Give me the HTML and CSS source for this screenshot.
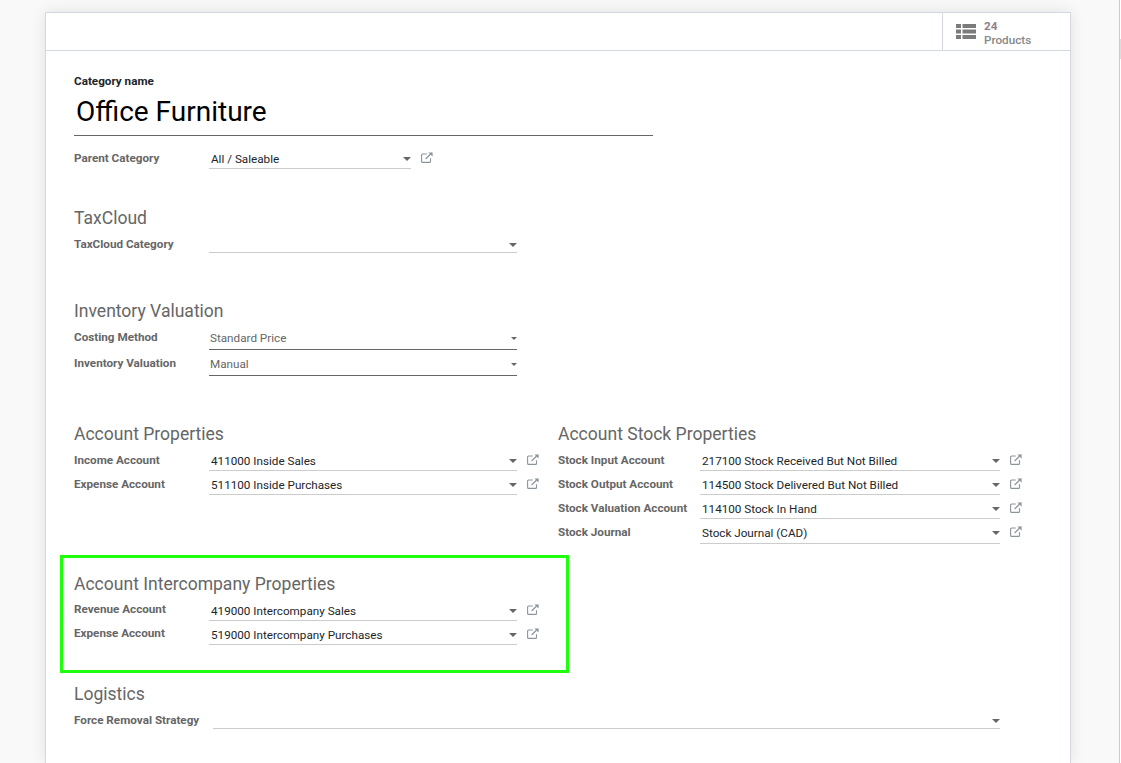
FILE: index.html
```html
<!DOCTYPE html>
<html lang="en">
<head>
  <meta charset="UTF-8" />
  <title>Office Furniture</title>
  <link rel="stylesheet" href="styles.css">
</head>
<body>
  <svg class="defs" width="0" height="0">
    <symbol id="ext" viewBox="0 0 12 11">
      <path d="M9.5 6.2V9.4a1 1 0 0 1-1 1H1.600a1 1 0 0 1-1-1V3a1 1 0 0 1 1-1h4.200" fill="none" stroke="currentColor" stroke-width="1.1"/>
      <path d="M4.600 7 10.600 1" fill="none" stroke="currentColor" stroke-width="1.2"/>
      <path d="M7.400 .4h4.200v4.200z" fill="currentColor"/>
    </symbol>
  </svg>

  <div class="scroll-edge"><i class="scroll-thumb"></i></div>

  <div class="sheet">
    <div class="button-box">
      <button class="stat-button">
        <svg class="stat-icon" width="20" height="15" viewBox="0 0 20 15">
          <path d="M0 0h5v4H0zM6.500 0H20v4H6.500zM0 5.500h5v4H0zM6.500 5.500H20v4H6.500zM0 11h5v4H0zM6.500 11H20v4H6.500z" fill="#7c7b7b"/>
        </svg>
        <span class="stat-text"><b class="stat-value">24</b><span>Products</span></span>
      </button>
    </div>

    <div class="form">
      <label class="title-label">Category name</label>
      <div class="title-name">Office Furniture</div>

      <div class="row parent-row">
        <label>Parent Category</label>
        <div class="field parent-field"><span>All / Saleable</span><i class="caret"></i></div>
        <svg class="ext"><use href="#ext"/></svg>
      </div>

      <h3 class="taxcloud-head">TaxCloud</h3>
      <div class="row">
        <label>TaxCloud Category</label>
        <div class="field field-empty"><span></span><i class="caret"></i></div>
      </div>

      <h3 class="inventory-head">Inventory Valuation</h3>
      <div class="row row-tall">
        <label>Costing Method</label>
        <div class="field field-select"><span>Standard Price</span><i class="caret caret-small"></i></div>
      </div>
      <div class="row row-tall">
        <label>Inventory Valuation</label>
        <div class="field field-select"><span>Manual</span><i class="caret caret-small"></i></div>
      </div>

      <div class="columns">
        <div class="group">
          <h3>Account Properties</h3>
          <div class="row">
            <label>Income Account</label>
            <div class="field"><span>411000 Inside Sales</span><i class="caret"></i></div>
            <svg class="ext"><use href="#ext"/></svg>
          </div>
          <div class="row">
            <label>Expense Account</label>
            <div class="field"><span>511100 Inside Purchases</span><i class="caret"></i></div>
            <svg class="ext"><use href="#ext"/></svg>
          </div>
        </div>
        <div class="group group-right">
          <h3>Account Stock Properties</h3>
          <div class="row">
            <label>Stock Input Account</label>
            <div class="field"><span>217100 Stock Received But Not Billed</span><i class="caret"></i></div>
            <svg class="ext"><use href="#ext"/></svg>
          </div>
          <div class="row">
            <label>Stock Output Account</label>
            <div class="field"><span>114500 Stock Delivered But Not Billed</span><i class="caret"></i></div>
            <svg class="ext"><use href="#ext"/></svg>
          </div>
          <div class="row">
            <label>Stock Valuation Account</label>
            <div class="field"><span>114100 Stock In Hand</span><i class="caret"></i></div>
            <svg class="ext"><use href="#ext"/></svg>
          </div>
          <div class="row">
            <label>Stock Journal</label>
            <div class="field field-last"><span>Stock Journal (CAD)</span><i class="caret"></i></div>
            <svg class="ext"><use href="#ext"/></svg>
          </div>
        </div>
      </div>

      <div class="highlight">
        <h3>Account Intercompany Properties</h3>
        <div class="row">
          <label>Revenue Account</label>
          <div class="field"><span>419000 Intercompany Sales</span><i class="caret"></i></div>
          <svg class="ext"><use href="#ext"/></svg>
        </div>
        <div class="row">
          <label>Expense Account</label>
          <div class="field"><span>519000 Intercompany Purchases</span><i class="caret"></i></div>
          <svg class="ext"><use href="#ext"/></svg>
        </div>
      </div>

      <h3 class="logistics-head">Logistics</h3>
      <div class="row row-wide">
        <label>Force Removal Strategy</label>
        <div class="field field-empty"><span></span><i class="caret"></i></div>
      </div>
    </div>
  </div>
</body>
</html>
```

FILE: styles.css
```css
html, body { height: 100%; }

body {
  margin: 0;
  height: 763px;
  overflow: hidden;
  background: #f9f9f9;
  font-family: Roboto, "Liberation Sans", sans-serif;
  font-size: 11.7px;
  color: #212529;
}

.defs { position: absolute; }

.scroll-edge {
  position: absolute;
  top: 0;
  right: 0;
  bottom: 0;
  width: 1px;
  border-left: 1px solid #ccc;
  background: #fff;
}

.scroll-thumb {
  display: block;
  height: 20px;
  margin-top: 39px;
  background: #ddd;
}

.sheet {
  width: 1024px;
  height: 750px;
  margin: 12px 0 0 45px;
  background: #fff;
  border: 1px solid #d3d7de;
  border-bottom: none;
  box-shadow: 0 0 14px rgba(0, 0, 0, 0.1);
}

.button-box {
  display: flex;
  justify-content: flex-end;
  height: 37px;
  border-bottom: 1px solid #d3d7de;
}

.stat-button {
  display: flex;
  align-items: center;
  gap: 8px;
  width: 128px;
  padding: 0 0 0 13px;
  background: #fff;
  border: none;
  border-left: 1px solid #d3d7de;
  font: inherit;
  text-align: left;
}

.stat-text {
  display: flex;
  flex-direction: column;
  padding-top: 2px;
  font-weight: 500;
  line-height: 14px;
  color: #888;
}

.stat-value { font-weight: 700; color: #8f7f8c; }

.form { padding: 24px 0 0 28px; }

.title-label {
  display: block;
  font-weight: 700;
  line-height: 13px;
  color: #212529;
}

.title-name {
  width: 577px;
  height: 41px;
  margin-top: 6px;
  padding-left: 2px;
  border-bottom: 1px solid #666;
  font-size: 28px;
  line-height: 36px;
  color: #000;
}

h3 {
  margin: 0 0 4px;
  font-size: 17.55px;
  font-weight: 400;
  line-height: 24px;
  color: #666;
}

.row {
  display: flex;
  align-items: flex-start;
  height: 24px;
}

.row label {
  flex: none;
  width: 135px;
  padding-top: 4px;
  font-weight: 700;
  line-height: 13px;
  color: #666;
}

.field {
  display: flex;
  align-items: center;
  justify-content: space-between;
  flex: none;
  box-sizing: border-box;
  width: 308px;
  height: 21px;
  padding: 1px 0 0 2px;
  border-bottom: 1px solid #ccc;
  color: #212529;
}

.field-empty { height: 19px; padding-top: 3px; }
.field-last { height: 22px; padding-bottom: 1px; }

.caret {
  width: 0;
  height: 0;
  border-top: 4px solid #666;
  border-left: 4px solid transparent;
  border-right: 4px solid transparent;
}

.caret-small { margin-top: 2px; border-width: 3px 3px 0; }

.ext {
  flex: none;
  width: 12px;
  height: 11px;
  margin: 4px 0 0 10px;
  color: #8a949b;
}

.parent-row { margin-top: 12px; }
.parent-field { width: 202px; }

.taxcloud-head { margin-top: 34px; }
.inventory-head { margin-top: 41px; }
.row-tall { height: 26px; }

.field-select {
  height: 23px;
  padding: 0 0 1px 1px;
  border-bottom-color: #666;
  color: #666;
}

.columns {
  display: flex;
  margin-top: 43px;
}

.group { width: 484px; }
.group-right .row label { width: 142px; }
.group-right .field { width: 300px; }

.highlight {
  box-sizing: border-box;
  width: 509px;
  height: 118px;
  margin: 9px 0 0 -14px;
  padding: 14px 0 0 11px;
  border: 3px solid #1eff0d;
}

.highlight .row label { padding-top: 3px; }

.logistics-head { margin-top: 9px; }
.row-wide label { width: 139px; }
.row-wide .field { width: 787px; }
```
